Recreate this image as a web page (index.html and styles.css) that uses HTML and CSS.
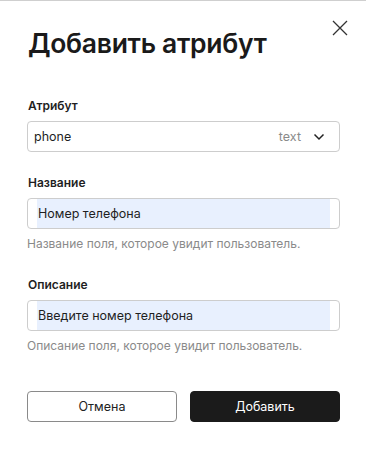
FILE: index.html
```html
<!DOCTYPE html>
<html lang="ru">
<head>
  <meta charset="UTF-8">
  <title>Добавить атрибут</title>
  <link rel="stylesheet" href="styles.css">
</head>
<body>
  <div class="dialog">
    <button class="close-btn" aria-label="Закрыть">
      <svg width="16" height="16" viewBox="0 0 16 16"><path d="M1 1L15 15M15 1L1 15" stroke="#333" stroke-width="1.3" fill="none"/></svg>
    </button>
    <h1 class="dialog-title">Добавить атрибут</h1>

    <div class="field">
      <label class="field-label">Атрибут</label>
      <div class="select-box">
        <span class="select-value">phone</span>
        <span class="select-type">text</span>
        <svg class="chevron" width="12" height="8" viewBox="0 0 12 8"><path d="M1.5 1.5L6 6L10.5 1.5" stroke="#222" stroke-width="1.5" fill="none"/></svg>
      </div>
    </div>

    <div class="field">
      <label class="field-label">Название</label>
      <div class="text-box"><span class="text-value">Номер телефона</span></div>
      <div class="field-hint">Название поля, которое увидит пользователь.</div>
    </div>

    <div class="field">
      <label class="field-label">Описание</label>
      <div class="text-box"><span class="text-value">Введите номер телефона</span></div>
      <div class="field-hint">Описание поля, которое увидит пользователь.</div>
    </div>

    <div class="actions">
      <button class="btn btn-outline">Отмена</button>
      <button class="btn btn-dark">Добавить</button>
    </div>
  </div>
</body>
</html>
```

FILE: styles.css
```css
* {
  margin: 0;
  padding: 0;
  box-sizing: border-box;
  font-family: 'Inter', 'Liberation Sans', sans-serif;
}

body {
  background: #fff;
  color: #1c1c1c;
}

.dialog {
  position: relative;
  height: 449px;
  border-top: 1px solid #cfcfcf;
  padding: 0 26px 0 27px;
}

.close-btn {
  position: absolute;
  top: 19px;
  right: 18px;
  border: none;
  background: none;
  width: 16px;
  height: 16px;
  cursor: pointer;
}

.close-btn svg {
  display: block;
}

.dialog-title {
  font-size: 26.5px;
  font-weight: 600;
  line-height: 32px;
  letter-spacing: -0.3px;
  padding-top: 26px;
  padding-left: 1px;
  margin-bottom: 39px;
  color: #1a1a1a;
}

.field {
  margin-bottom: 23px;
}

.field:has(.field-hint) {
  margin-bottom: 25px;
}

.field-label {
  display: block;
  font-size: 12px;
  font-weight: 600;
  line-height: 16px;
  margin-bottom: 7px;
  padding-left: 1px;
  color: #1f1f1f;
}

.select-box,
.text-box {
  display: flex;
  align-items: center;
  height: 31px;
  border: 1px solid #cdcdcd;
  border-radius: 4px;
  font-size: 12.5px;
}

.select-box {
  padding: 0 14px 0 6px;
}

.select-value {
  flex: 1;
  color: #1f1f1f;
}

.select-type {
  color: #8a8a8a;
  margin-right: 12px;
}

.chevron {
  display: block;
}

.text-box {
  padding: 0 9px;
  align-items: stretch;
}

.text-value {
  flex: 1;
  display: flex;
  align-items: center;
  padding-left: 1px;
  background: #e8f0fe;
  color: #1f1f1f;
}

.field-hint {
  font-size: 12px;
  line-height: 16px;
  color: #8a8a8a;
  margin-top: 7px;
}

.actions {
  display: flex;
  gap: 13px;
  margin-top: 37px;
}

.btn {
  flex: 1;
  height: 31px;
  border-radius: 4px;
  font-size: 12.5px;
  cursor: pointer;
}

.btn-outline {
  background: #fff;
  border: 1px solid #8a8a8a;
  color: #222;
}

.btn-dark {
  background: #1b1b1b;
  border: 1px solid #1b1b1b;
  color: #fff;
}
```
